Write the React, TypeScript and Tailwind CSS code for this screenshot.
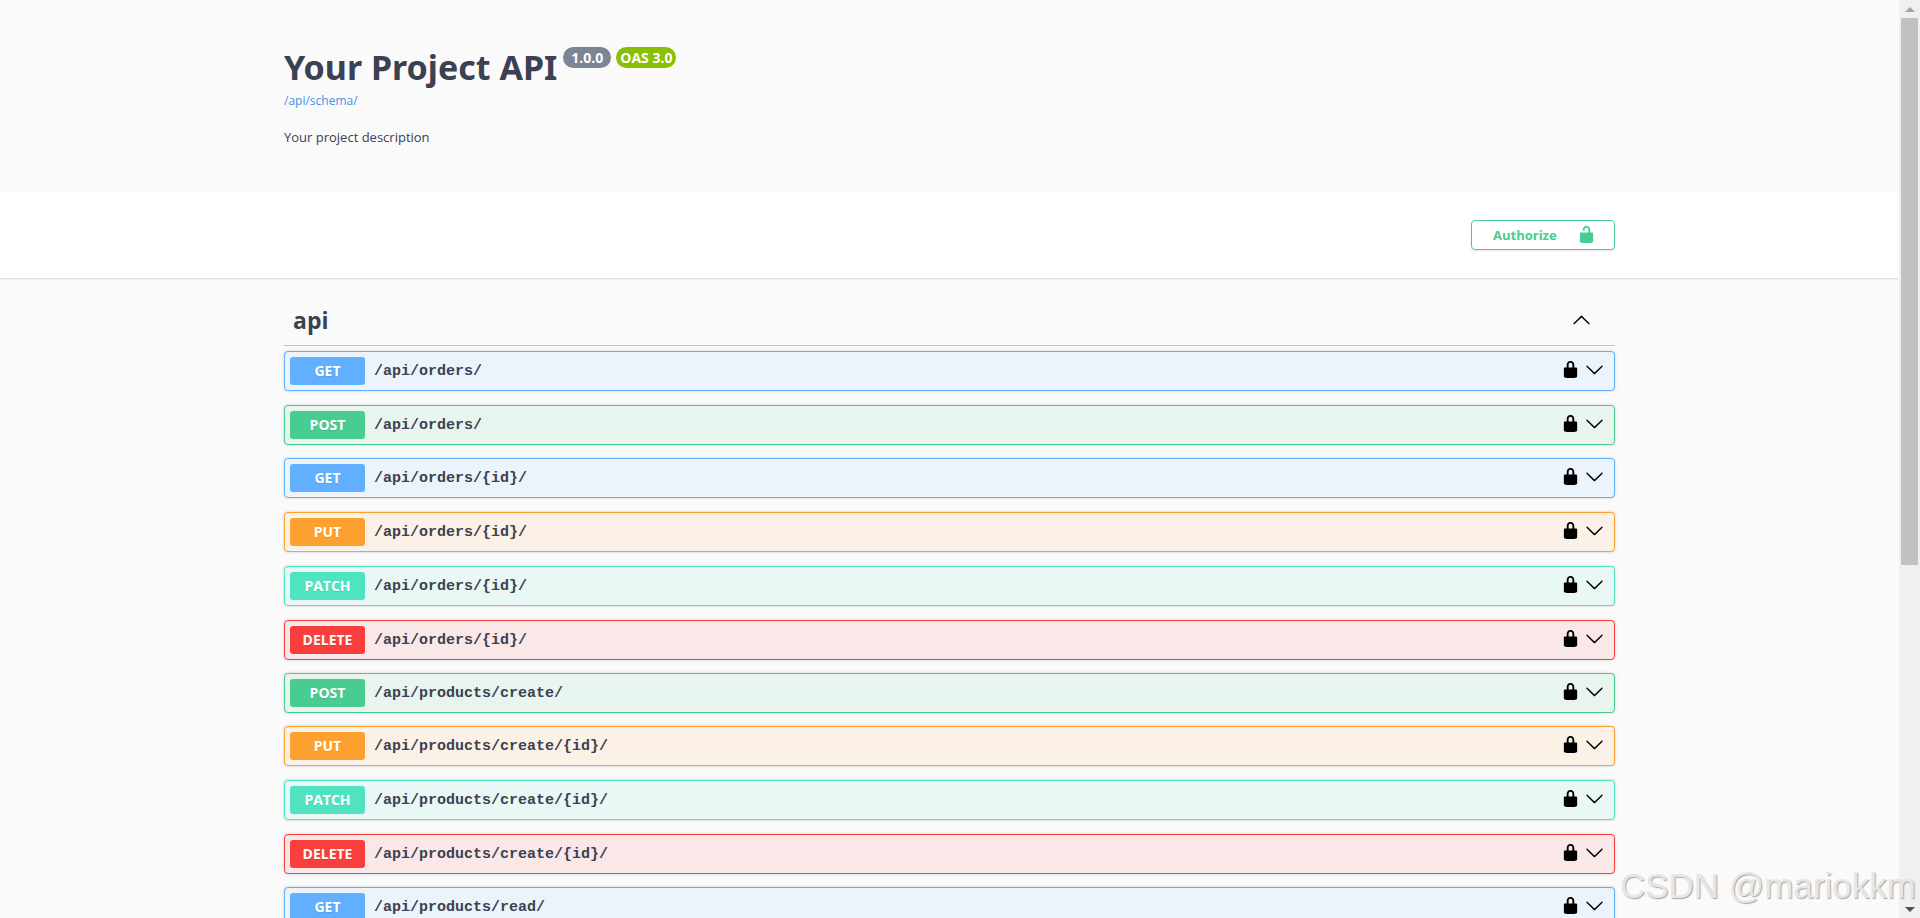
import clsx from "clsx"

type Method = "GET" | "POST" | "PUT" | "PATCH" | "DELETE"

const ENDPOINTS: { path: string; methods: Method[] }[] = [
  { path: "/api/orders/", methods: ["GET", "POST"] },
  { path: "/api/orders/{id}/", methods: ["GET", "PUT", "PATCH", "DELETE"] },
  { path: "/api/products/create/", methods: ["POST"] },
  { path: "/api/products/create/{id}/", methods: ["PUT", "PATCH", "DELETE"] },
  { path: "/api/products/read/", methods: ["GET"] },
]

const ROW_COLORS: Record<Method, string> = {
  GET: "border-[#61affe] bg-[#ebf3fb]",
  POST: "border-[#49cc90] bg-[#e8f5ef]",
  PUT: "border-[#fca130] bg-[#fbf1e6]",
  PATCH: "border-[#50e3c2] bg-[#e9f8f4]",
  DELETE: "border-[#f93e3e] bg-[#fae7e7]",
}

const BADGE_COLORS: Record<Method, string> = {
  GET: "bg-[#61affe]",
  POST: "bg-[#49cc90]",
  PUT: "bg-[#fca130]",
  PATCH: "bg-[#50e3c2]",
  DELETE: "bg-[#f93e3e]",
}

const ICONS = {
  locked:
    "M15.8 8H14V5.6C14 2.703 12.665 1 10 1 7.334 1 6 2.703 6 5.6V8H4c-.553 0-1 .646-1 1.199V17c0 .549.428 1.139.951 1.307l1.197.387C5.672 18.861 6.55 19 7.1 19h5.8c.549 0 1.428-.139 1.951-.307l1.196-.387c.524-.167.953-.757.953-1.306V9.199C17 8.646 16.352 8 15.8 8zM12 8H8V5.199C8 3.754 8.797 3 10 3c1.203 0 2 .754 2 2.199V8z",
  unlocked:
    "M15.8 8H14V5.6C14 2.703 12.665 1 10 1 7.334 1 6 2.703 6 5.6V6h2v-.801C8 3.754 8.797 3 10 3c1.203 0 2 .754 2 2.199V8H4c-.553 0-1 .646-1 1.199V17c0 .549.428 1.139.951 1.307l1.197.387C5.672 18.861 6.55 19 7.1 19h5.8c.549 0 1.428-.139 1.951-.307l1.196-.387c.524-.167.953-.757.953-1.306V9.199C17 8.646 16.352 8 15.8 8z",
  down:
    "M17.418 6.109c.272-.268.709-.268.979 0s.271.701 0 .969l-7.908 7.83c-.27.268-.707.268-.979 0l-7.908-7.83c-.27-.268-.27-.701 0-.969.271-.268.709-.268.979 0L10 13.25l7.418-7.141z",
  up:
    "M17.418 14.908c.272.268.709.268.979 0s.271-.701 0-.969l-7.908-7.83c-.27-.268-.707-.268-.979 0l-7.908 7.83c-.27.268-.27.701 0 .969.271.268.709.268.979 0L10 7.767l7.418 7.141z",
}

const Icon = ({ name }: { name: keyof typeof ICONS }) => (
  <svg viewBox="0 0 20 20" className="size-[19px] shrink-0 fill-current" aria-hidden="true">
    <path d={ICONS[name]} />
  </svg>
)

const Container = ({ className, children }: { className?: string; children: React.ReactNode }) => (
  <div className={clsx("mx-auto w-full max-w-[1331px]", className)}>{children}</div>
)

const Operation = ({ method, path }: { method: Method; path: string }) => (
  <div className={clsx("flex items-center rounded border p-[5px] pr-[10px] shadow-[0_0_3px_rgba(0,0,0,0.19)]", ROW_COLORS[method])}>
    <button type="button" className="flex flex-1 items-center gap-[9px] text-left">
      <span className={clsx("w-[75px] rounded-[3px] text-center text-sm leading-7 font-bold text-white [text-shadow:0_1px_0_rgba(0,0,0,0.1)]", BADGE_COLORS[method])}>
        {method}
      </span>
      <span className="pt-[2px] font-['Liberation_Mono',monospace] text-[15px] leading-5 font-bold">{path}</span>
    </button>
    <div className="flex gap-[5px] pb-1 text-black">
      <button type="button" aria-label="authorization button locked"><Icon name="locked" /></button>
      <button type="button" aria-label="expand operation"><Icon name="down" /></button>
    </div>
  </div>
)

const Scrollbar = () => (
  <div className="flex w-[21px] shrink-0 flex-col items-center bg-[#f0f0f0]" aria-hidden="true">
    <div className="flex h-[18px] items-center">
      <svg viewBox="0 0 10 5" className="h-[5px] w-[10px] fill-[#a3a3a3]"><path d="M5 0l5 5H0z" /></svg>
    </div>
    <div className="flex w-full flex-1 flex-col items-center">
      <div className="h-[62%] w-[17px] bg-[#c1c1c1]" />
    </div>
    <div className="flex h-[18px] items-center">
      <svg viewBox="0 0 10 5" className="h-[5px] w-[10px] fill-[#505050]"><path d="M5 5L0 0h10z" /></svg>
    </div>
  </div>
)

const App = () => {
  return (
    <div className="relative flex h-screen bg-[#fafafa] font-['Open_Sans',sans-serif] text-[#3b4151]">
      <main className="flex-1 overflow-hidden">
        <Container className="pt-[45px] pb-11">
          <div className="flex items-start gap-[6px]">
            <h1 className="font-['Noto_Sans',sans-serif] text-[34px] leading-[44px] font-bold">Your Project API</h1>
            <div className="flex gap-[5px] pt-[2px] text-sm leading-[21px] font-bold text-white">
              <span className="rounded-full bg-[#7d8492] px-2">1.0.0</span>
              <span className="rounded-full bg-[#89bf04] px-1">OAS 3.0</span>
            </div>
          </div>
          <a href="/api/schema/" className="block text-xs leading-6 text-[#4990e2]">/api/schema/</a>
          <p className="mt-[13px] text-[13px] leading-[22px]">Your project description</p>
        </Container>

        <div className="bg-white py-7 shadow-[0_1px_2px_rgba(0,0,0,0.15)]">
          <Container className="flex justify-end">
            <button type="button" className="flex h-[30px] w-36 items-center justify-between rounded border border-[#49cc90] pr-[18px] pb-[2px] pl-[21px] text-[13px] font-bold text-[#49cc90] shadow-[0_1px_2px_rgba(0,0,0,0.1)]">
              <span className="pt-1">Authorize</span>
              <Icon name="unlocked" />
            </button>
          </Container>
        </div>

        <Container className="pt-[18px]">
          <h2 className="border-b border-[#3b4151]/30">
            <button type="button" className="flex w-full items-center justify-between py-2 pr-6 pl-[9px] text-[23px] leading-[33px] font-bold">
              api
              <span className="pb-[2px] text-black"><Icon name="up" /></span>
            </button>
          </h2>
          <div className="flex flex-col gap-[13px] pt-[5px]">
            {ENDPOINTS.map((endpoint) => (
              <div key={endpoint.path} className="flex flex-col gap-[14px]">
                {endpoint.methods.map((method) => (
                  <Operation key={method} method={method} path={endpoint.path} />
                ))}
              </div>
            ))}
          </div>
        </Container>
      </main>

      <Scrollbar />

      <div className="pointer-events-none absolute right-1 bottom-[6px] font-['Liberation_Sans',sans-serif] text-[35px] text-[#e6e6e6] [text-shadow:1px_1px_1px_#a6a6a6]">
        CSDN @mariokkm
      </div>
    </div>
  )
}

export default App
